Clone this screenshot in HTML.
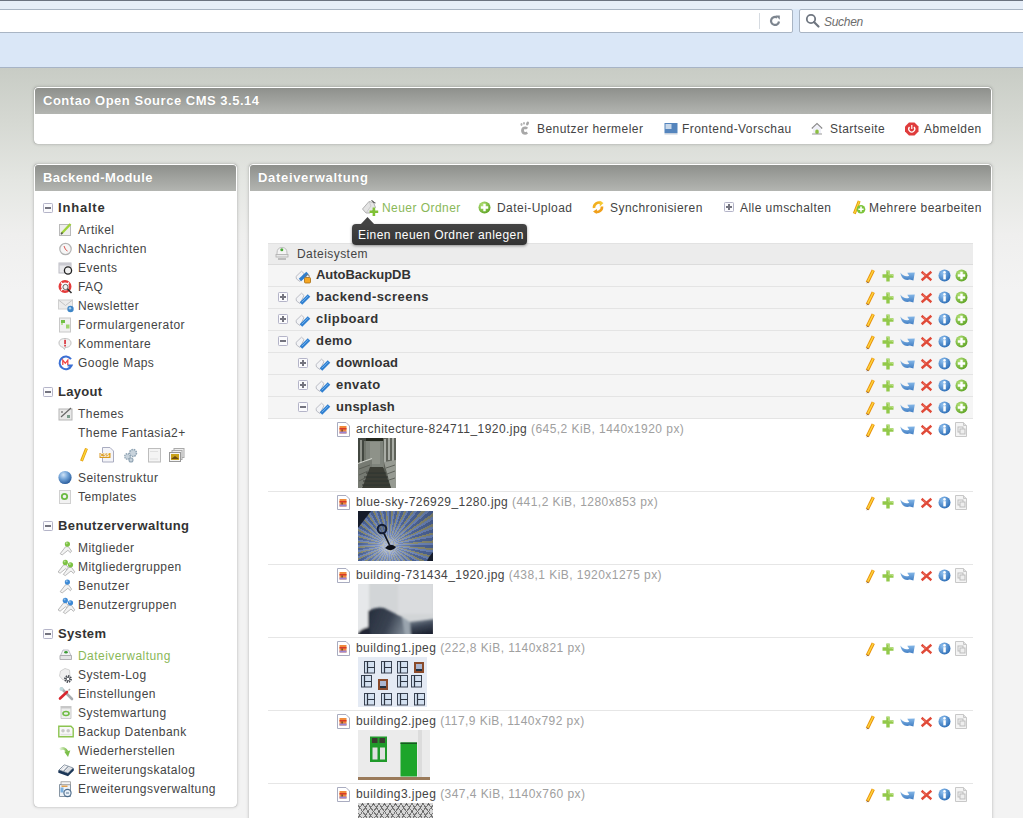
<!DOCTYPE html><html><head><meta charset="utf-8"><style>
*{margin:0;padding:0;box-sizing:border-box}
html,body{width:1023px;height:818px;overflow:hidden}
body{position:relative;font-family:"Liberation Sans",sans-serif;color:#444;
 background:linear-gradient(#c8ccc5 0px,#c8ccc5 68px,#d5d8d2 120px,#e4e6e2 180px,#efefee 235px,#f3f3f3 290px,#f3f3f3 818px);}
.a{position:absolute}
.t{position:absolute;font-size:12px;letter-spacing:0.45px;white-space:nowrap;line-height:14px;height:14px}
.b{font-weight:bold;font-size:13px;letter-spacing:0.45px;line-height:15px}
.gh{letter-spacing:0.6px}
.g{color:#a0a0a0}
.panel{position:absolute;background:#fff;border:1px solid #fff;border-radius:4px;box-shadow:0 0 1px 0 rgba(0,0,0,.25),0 0 3px 1px rgba(0,0,0,.12)}
.hd{position:absolute;left:0;right:0;top:0;height:26px;border-radius:3px 3px 0 0;background:linear-gradient(#8e908c,#b3b5b1)}
.ht{position:absolute;font-size:13px;font-weight:bold;letter-spacing:0.4px;color:#fff;white-space:nowrap;line-height:15px;text-shadow:0 0 1px rgba(0,0,0,.15)}
svg{position:absolute;overflow:visible}
</style></head><body><div class="a" style="left:0;top:0;width:1023px;height:68px;background:#dae7f7"></div>
<div class="a" style="left:0;top:0;width:1023px;height:1px;background:#6b7380"></div>
<div class="a" style="left:0;top:1px;width:1023px;height:8px;background:#e6eef8"></div>
<div class="a" style="left:-5px;top:9px;width:798px;height:24px;background:#fff;border:1px solid #a9b5c4;border-radius:2px"></div>
<div class="a" style="left:759px;top:13px;width:1px;height:16px;background:#d6dbe1"></div>
<svg style="left:768px;top:14px" width="14" height="14" viewBox="0 0 14 14"><path d="M11 7.5A4 4 0 1 1 9.2 3.6" fill="none" stroke="#7d858f" stroke-width="2.2"/><path d="M7.6 1.5L11.8 1.5L11.8 5.8Z" fill="#7d858f"/></svg>
<div class="a" style="left:799px;top:9px;width:240px;height:24px;background:#fff;border:1px solid #a9b5c4;border-radius:2px"></div>
<svg style="left:805px;top:13px" width="16" height="16" viewBox="0 0 16 16"><circle cx="6" cy="6" r="4.2" fill="none" stroke="#6f7680" stroke-width="1.8"/><path d="M9 9L13.5 13.5" stroke="#6f7680" stroke-width="2.2" stroke-linecap="round"/></svg>
<div class="t" style="left:824px;top:14px;font-style:italic;color:#6d6d6d;letter-spacing:-0.3px;top:15px">Suchen</div>
<div class="a" style="left:0;top:67px;width:1023px;height:1px;background:#a7b4c6"></div>
<div class="panel" style="left:34px;top:87px;width:958px;height:57px"><div class="hd"></div></div>
<div class="ht" style="left:43px;top:93px;letter-spacing:0.52px">Contao Open Source CMS 3.5.14</div>
<svg style="left:518px;top:121px" width="14" height="16" viewBox="0 0 14 16"><path d="M7 5.5C3.5 5.5 2.5 9 3.5 11.5S8 14.5 10 12.5L8.5 10.5C7.5 11.5 6 11 6 9.5S7 7.5 8 8.5L10 7C9.5 6 8.5 5.5 7 5.5Z" fill="#a8a8a8"/><ellipse cx="3.5" cy="3.5" rx="1" ry="1.4" fill="#b5b5b5"/><ellipse cx="6" cy="2.3" rx="1" ry="1.4" fill="#b5b5b5"/><ellipse cx="9.5" cy="2.5" rx="1.3" ry="2" fill="#a5a5a5" transform="rotate(30 9.5 2.5)"/></svg>
<div class="t " style="left:537px;top:122px;">Benutzer hermeler</div>
<svg style="left:664px;top:122px" width="14" height="14" viewBox="0 0 14 14"><rect x="0.5" y="1" width="13" height="10" fill="#5585bd"/><rect x="1.5" y="2" width="6" height="5" fill="#c8d8ea"/><rect x="0.5" y="11" width="13" height="1.5" fill="#c5cfdc"/></svg>
<div class="t " style="left:682px;top:122px;">Frontend-Vorschau</div>
<svg style="left:811px;top:122px" width="13" height="14" viewBox="0 0 13 14"><path d="M0.8 6.5L6 1.5L11.2 6.5" fill="none" stroke="#888" stroke-width="1.2"/><path d="M2 6.3V11.8H10V6.3L6 2.6Z" fill="#f0f0f8"/><rect x="4.3" y="7.5" width="3.4" height="4.5" rx="1.5" fill="#8cc040"/><rect x="1" y="11.5" width="10" height="1" fill="#999"/></svg>
<div class="t " style="left:830px;top:122px;">Startseite</div>
<svg style="left:905px;top:122px" width="14" height="14" viewBox="0 0 14 14"><path d="M4 0.5h5.5l4 4v5l-4 4H4l-4-4v-5z" fill="#df3c3c"/><path d="M4.5 5A3 3 0 1 0 9 5" fill="none" stroke="#fff" stroke-width="1.3"/><rect x="6.2" y="3" width="1.2" height="4" fill="#fff"/></svg>
<div class="t " style="left:924px;top:122px;">Abmelden</div>
<div class="panel" style="left:34px;top:164px;width:203px;height:643px"><div class="hd"></div></div>
<div class="ht" style="left:43px;top:170px;letter-spacing:0.42px">Backend-Module</div>
<svg style="left:43px;top:203px" width="10" height="10" viewBox="0 0 10 10"><rect x="0.5" y="0.5" width="9" height="9" rx="0.8" fill="#fbfbfd" stroke="#b4b4c8"/><rect x="2" y="4" width="6" height="2" fill="#74747f"/></svg>
<div class="t b" style="left:58px;top:200px;color:#333;letter-spacing:0.8px">Inhalte</div>
<svg style="left:58px;top:222px" width="16" height="16" viewBox="0 0 16 16"><rect x="1.5" y="2.5" width="11" height="11" fill="#eee" stroke="#b9b9b9"/><path d="M3.5 11.5L12.5 2" stroke="#9fd23a" stroke-width="2.4"/><path d="M3 12.2L4.5 10.5" stroke="#555" stroke-width="1.5"/></svg>
<div class="t " style="left:78px;top:223px;">Artikel</div>
<svg style="left:58px;top:241px" width="16" height="16" viewBox="0 0 16 16"><circle cx="7.5" cy="8" r="5.7" fill="#f6f6f6" stroke="#b3b3b3" stroke-width="1.2"/><path d="M7.5 8.5L6 5M7.5 8.5L9.5 10" stroke="#d9534f" stroke-width="1"/></svg>
<div class="t " style="left:78px;top:242px;">Nachrichten</div>
<svg style="left:58px;top:260px" width="16" height="16" viewBox="0 0 16 16"><rect x="1" y="3" width="12" height="10" fill="#e9e9ec" stroke="#bcbcc4"/><rect x="1" y="3" width="12" height="2.5" fill="#c9c9d0"/><circle cx="10" cy="10.5" r="3.6" fill="#f0f0f0" stroke="#222" stroke-width="1.3"/></svg>
<div class="t " style="left:78px;top:261px;">Events</div>
<svg style="left:58px;top:279px" width="16" height="16" viewBox="0 0 16 16"><circle cx="7" cy="7.5" r="5.2" fill="none" stroke="#e53b3b" stroke-width="2.6"/><path d="M3 3.5L5 5.5M11 3.5L9 5.5M3 11.5L5 9.5" stroke="#fff" stroke-width="1.4"/><circle cx="7.5" cy="8" r="2.6" fill="#f4f4f4" stroke="#555" stroke-width="0.9"/><path d="M9.5 10L13.5 14" stroke="#333" stroke-width="1.6"/></svg>
<div class="t " style="left:78px;top:280px;">FAQ</div>
<svg style="left:58px;top:298px" width="16" height="16" viewBox="0 0 16 16"><rect x="0.5" y="2" width="14" height="9" fill="#ececec" stroke="#d0d0d0"/><path d="M0.5 2L7.5 7.5L14.5 2" fill="none" stroke="#c4c4c4"/><circle cx="12.5" cy="11" r="3.2" fill="#3f86c7"/><circle cx="12" cy="10.3" r="1.2" fill="#a9d0f0"/></svg>
<div class="t " style="left:78px;top:299px;">Newsletter</div>
<svg style="left:58px;top:317px" width="16" height="16" viewBox="0 0 16 16"><rect x="1.5" y="1" width="11" height="14" fill="#f0f0f0" stroke="#c8c8c8"/><rect x="3" y="3" width="4" height="3" fill="#72c046"/><rect x="8" y="7.5" width="3.5" height="4" fill="#9ed56e"/><rect x="3" y="6" width="2" height="2" fill="#b8e096"/></svg>
<div class="t " style="left:78px;top:318px;">Formulargenerator</div>
<svg style="left:58px;top:336px" width="16" height="16" viewBox="0 0 16 16"><path d="M7 2.5C10.8 2.5 13 4.3 13 7S10.8 11.5 7 11.5L6.5 13.5L5 11.3C2.6 10.8 1 9.2 1 7C1 4.3 3.2 2.5 7 2.5Z" fill="#f2f2f2" stroke="#c0c0c0"/><rect x="6.2" y="3.8" width="1.7" height="4.2" fill="#d9363e"/><rect x="6.2" y="8.8" width="1.7" height="1.7" fill="#d9363e"/></svg>
<div class="t " style="left:78px;top:337px;">Kommentare</div>
<svg style="left:58px;top:355px" width="16" height="16" viewBox="0 0 16 16"><path d="M13 4.2A6.3 6.3 0 1 0 13.6 10.5H9.5" fill="none" stroke="#3b6fd4" stroke-width="2"/><path d="M4.8 10V5.2L7.3 8.3L9.8 5.2V10" fill="none" stroke="#f04646" stroke-width="1.3"/></svg>
<div class="t " style="left:78px;top:356px;">Google Maps</div>
<svg style="left:43px;top:387px" width="10" height="10" viewBox="0 0 10 10"><rect x="0.5" y="0.5" width="9" height="9" rx="0.8" fill="#fbfbfd" stroke="#b4b4c8"/><rect x="2" y="4" width="6" height="2" fill="#74747f"/></svg>
<div class="t b" style="left:58px;top:384px;color:#333;letter-spacing:0.3px">Layout</div>
<svg style="left:58px;top:406px" width="16" height="16" viewBox="0 0 16 16"><rect x="1" y="3" width="13" height="11" fill="#e8e8e8" stroke="#b5b5b5"/><path d="M3 11L13 2" stroke="#666" stroke-width="1.2"/><rect x="9" y="9" width="3" height="3" fill="#7a9a8a"/><rect x="3" y="5" width="2" height="2" fill="#999"/></svg>
<div class="t " style="left:78px;top:407px;">Themes</div>
<div class="t " style="left:78px;top:426px;">Theme Fantasia2+</div>
<svg style="left:58px;top:470px" width="16" height="16" viewBox="0 0 16 16"><defs><radialGradient id="gl" cx="38%" cy="30%" r="70%"><stop offset="0" stop-color="#cfe3f7"/><stop offset="0.5" stop-color="#6fa1d6"/><stop offset="1" stop-color="#2c5f9e"/></radialGradient></defs><circle cx="7" cy="7.5" r="6.6" fill="url(#gl)"/></svg>
<div class="t " style="left:78px;top:471px;">Seitenstruktur</div>
<svg style="left:58px;top:489px" width="16" height="16" viewBox="0 0 16 16"><rect x="1.5" y="1.5" width="11" height="13" fill="#f2f2f2" stroke="#d0d0d0"/><circle cx="6.5" cy="7.5" r="2.7" fill="none" stroke="#6dbb45" stroke-width="1.8"/></svg>
<div class="t " style="left:78px;top:490px;">Templates</div>
<svg style="left:43px;top:521px" width="10" height="10" viewBox="0 0 10 10"><rect x="0.5" y="0.5" width="9" height="9" rx="0.8" fill="#fbfbfd" stroke="#b4b4c8"/><rect x="2" y="4" width="6" height="2" fill="#74747f"/></svg>
<div class="t b" style="left:58px;top:518px;color:#333;letter-spacing:0.4px">Benutzerverwaltung</div>
<svg style="left:58px;top:540px" width="16" height="16" viewBox="0 0 16 16"><path d="M2.2 13.7L7.6000000000000005 6.699999999999999L10.4 6.699999999999999L13.600000000000001 11.1L12.4 12.7L9.9 10.3L4.2 14.9Z" fill="#f3f3f3" stroke="#a9a9a9" stroke-width="0.8" stroke-linejoin="round"/><circle cx="9.4" cy="4.1" r="2.6" fill="#7cc242"/><circle cx="8.700000000000001" cy="3.3" r="1" fill="#fff" opacity=".45"/></svg>
<div class="t " style="left:78px;top:541px;">Mitglieder</div>
<svg style="left:58px;top:559px" width="16" height="16" viewBox="0 0 16 16"><path d="M0.09999999999999964 13.0L5.5 6.0L8.3 6.0L11.5 10.4L10.3 12.0L7.8 9.6L2.0999999999999996 14.200000000000001Z" fill="#f3f3f3" stroke="#a9a9a9" stroke-width="0.8" stroke-linejoin="round"/><circle cx="7.3" cy="3.4" r="2.6" fill="#7cc242"/><circle cx="6.6" cy="2.5999999999999996" r="1" fill="#fff" opacity=".45"/><path d="M5.3 15.399999999999999L10.7 8.4L13.5 8.4L16.7 12.8L15.5 14.399999999999999L13.0 12.0L7.3 16.6Z" fill="#f3f3f3" stroke="#a9a9a9" stroke-width="0.8" stroke-linejoin="round"/><circle cx="12.5" cy="5.8" r="2.6" fill="#7cc242"/><circle cx="11.8" cy="5.0" r="1" fill="#fff" opacity=".45"/></svg>
<div class="t " style="left:78px;top:560px;">Mitgliedergruppen</div>
<svg style="left:58px;top:578px" width="16" height="16" viewBox="0 0 16 16"><path d="M2.2 13.7L7.6000000000000005 6.699999999999999L10.4 6.699999999999999L13.600000000000001 11.1L12.4 12.7L9.9 10.3L4.2 14.9Z" fill="#f3f3f3" stroke="#a9a9a9" stroke-width="0.8" stroke-linejoin="round"/><circle cx="9.4" cy="4.1" r="2.6" fill="#3d8ad6"/><circle cx="8.700000000000001" cy="3.3" r="1" fill="#fff" opacity=".45"/></svg>
<div class="t " style="left:78px;top:579px;">Benutzer</div>
<svg style="left:58px;top:597px" width="16" height="16" viewBox="0 0 16 16"><path d="M0.09999999999999964 13.0L5.5 6.0L8.3 6.0L11.5 10.4L10.3 12.0L7.8 9.6L2.0999999999999996 14.200000000000001Z" fill="#f3f3f3" stroke="#a9a9a9" stroke-width="0.8" stroke-linejoin="round"/><circle cx="7.3" cy="3.4" r="2.6" fill="#3d8ad6"/><circle cx="6.6" cy="2.5999999999999996" r="1" fill="#fff" opacity=".45"/><path d="M5.3 15.399999999999999L10.7 8.4L13.5 8.4L16.7 12.8L15.5 14.399999999999999L13.0 12.0L7.3 16.6Z" fill="#f3f3f3" stroke="#a9a9a9" stroke-width="0.8" stroke-linejoin="round"/><circle cx="12.5" cy="5.8" r="2.6" fill="#3d8ad6"/><circle cx="11.8" cy="5.0" r="1" fill="#fff" opacity=".45"/></svg>
<div class="t " style="left:78px;top:598px;">Benutzergruppen</div>
<svg style="left:43px;top:629px" width="10" height="10" viewBox="0 0 10 10"><rect x="0.5" y="0.5" width="9" height="9" rx="0.8" fill="#fbfbfd" stroke="#b4b4c8"/><rect x="2" y="4" width="6" height="2" fill="#74747f"/></svg>
<div class="t b" style="left:58px;top:626px;color:#333;letter-spacing:0.35px">System</div>
<svg style="left:58px;top:648px" width="16" height="16" viewBox="0 0 16 16"><path d="M2.5 7.5L5 2H10.5L13 7.5Z" fill="#f2f2f4" stroke="#b9b9c4" stroke-width="0.9"/><ellipse cx="8" cy="4.3" rx="1.8" ry="1.2" fill="#3a9a35"/><path d="M2 7.5H13.5V11.5H2Z" fill="#e4e4e6" stroke="#a8a8ac" stroke-width="0.9"/></svg>
<div class="t " style="left:78px;top:649px;color:#8ab858;">Dateiverwaltung</div>
<svg style="left:58px;top:667px" width="16" height="16" viewBox="0 0 16 16"><path d="M2.5 4L7 1.5L11.5 3L12 9L5 13L1.5 9Z" fill="#efefef" stroke="#c9c9c9" stroke-width="0.8"/><circle cx="10" cy="12" r="3" fill="none" stroke="#4a4e55" stroke-width="1.8" stroke-dasharray="1.4 0.9"/><circle cx="10" cy="12" r="1.8" fill="none" stroke="#5a5e65" stroke-width="1"/></svg>
<div class="t " style="left:78px;top:668px;">System-Log</div>
<svg style="left:58px;top:686px" width="16" height="16" viewBox="0 0 16 16"><path d="M3.5 2.5L14 13" stroke="#a8acb0" stroke-width="2.6" stroke-linecap="round"/><circle cx="3.5" cy="3" r="2" fill="#c0d8dc"/><path d="M9 6L2 12.5" stroke="#d8262e" stroke-width="2.6" stroke-linecap="round"/><path d="M10.5 4.5L12 3" stroke="#aaa" stroke-width="1.4"/></svg>
<div class="t " style="left:78px;top:687px;">Einstellungen</div>
<svg style="left:58px;top:705px" width="16" height="16" viewBox="0 0 16 16"><rect x="2.5" y="1" width="11" height="2" fill="#c8c8c8"/><path d="M3 3h10v10.5H3z" fill="#eeeeee" stroke="#c6c6c6" stroke-width="0.9"/><ellipse cx="8" cy="8.5" rx="3" ry="2" fill="none" stroke="#6fbc44" stroke-width="1.6"/></svg>
<div class="t " style="left:78px;top:706px;">Systemwartung</div>
<svg style="left:58px;top:724px" width="16" height="16" viewBox="0 0 16 16"><path d="M0.8 2.3H13L15.2 4.5V12.8H0.8Z" fill="#f8f8f8" stroke="#8cc450" stroke-width="1.4"/><circle cx="5" cy="6.8" r="1.8" fill="#c9c9c9"/><circle cx="10.2" cy="6.8" r="1.8" fill="#c9c9c9"/><rect x="2.5" y="9.8" width="11" height="1.5" fill="#e2e2e2"/></svg>
<div class="t " style="left:78px;top:725px;">Backup Datenbank</div>
<svg style="left:58px;top:743px" width="16" height="16" viewBox="0 0 16 16"><defs><linearGradient id="rg" x1="0" x2="1"><stop offset="0" stop-color="#e6f2dc"/><stop offset="1" stop-color="#7cbf4a"/></linearGradient></defs><path d="M2 6.5Q6 3.5 9 8.5" stroke="url(#rg)" stroke-width="2.6" fill="none"/><path d="M6.3 8.8L12.3 7.6L10 14Z" fill="#7cbf4a"/></svg>
<div class="t " style="left:78px;top:744px;">Wiederherstellen</div>
<svg style="left:58px;top:762px" width="16" height="16" viewBox="0 0 16 16"><path d="M0.3 8.6L6 3.6L15.8 6.4V8.4L10 14.2L0.3 10.8Z" fill="#1b3657"/><path d="M1 8L6.2 2.8L10.4 4.2L5.4 9.4Z" fill="#f4f4f6" stroke="#56687c" stroke-width="0.6"/><path d="M5.4 9.4L10.4 4.2L15.2 6L10 11.2Z" fill="#e4e6ea" stroke="#56687c" stroke-width="0.6"/><path d="M3 7.6L7 4.2M7.5 10.2L11.8 5.6M9 10.8L13.2 6.4" stroke="#b9bec6" stroke-width="0.5"/></svg>
<div class="t " style="left:78px;top:763px;">Erweiterungskatalog</div>
<svg style="left:58px;top:781px" width="16" height="16" viewBox="0 0 16 16"><path d="M1.5 3.5h11v12h-11z" fill="#eef2f6" stroke="#7a8a9a" stroke-width="0.9"/><rect x="3" y="0.8" width="9.5" height="3" fill="#f4f4f4" stroke="#888" stroke-width="0.7"/><rect x="3.5" y="4.5" width="6" height="1.5" fill="#e0a050"/><rect x="2.5" y="6.5" width="3" height="5" fill="#7bb0e0"/><circle cx="9.5" cy="12" r="3.6" fill="#e8f0f8" stroke="#4a6a8a" stroke-width="1.1"/><path d="M8 12h3" stroke="#4a6a8a" stroke-width="0.9"/></svg>
<div class="t " style="left:78px;top:782px;">Erweiterungsverwaltung</div>
<svg style="left:79px;top:447px" width="16" height="16" viewBox="0 0 16 16"><path d="M2.5 14L7.5 1.5" stroke="#e39a0b" stroke-width="3"/><path d="M2.8 13.5L7.5 1.8" stroke="#fcd637" stroke-width="1.4"/></svg>
<svg style="left:99px;top:447px" width="16" height="16" viewBox="0 0 16 16"><path d="M3.5 0.5h7.5l3.5 3.5v11h-11z" fill="#f4f4f8" stroke="#a9acc0"/><rect x="0.5" y="6" width="11" height="5" fill="#d99a20"/><text x="6" y="10.2" font-size="4.5" font-family="Liberation Sans" font-weight="bold" fill="#fff" text-anchor="middle">CSS</text></svg>
<svg style="left:123px;top:447px" width="16" height="16" viewBox="0 0 16 16"><circle cx="10" cy="6" r="3.5" fill="#c8d3dc" stroke="#8fa3b3" stroke-width="1.5" stroke-dasharray="1.6 0.8"/><circle cx="4.5" cy="9.5" r="2.8" fill="#c8d3dc" stroke="#8fa3b3" stroke-width="1.3" stroke-dasharray="1.4 0.8"/><circle cx="8" cy="13" r="2" fill="#c8d3dc" stroke="#8fa3b3" stroke-width="1.1"/></svg>
<svg style="left:148px;top:448px" width="16" height="16" viewBox="0 0 16 16"><rect x="0.5" y="0.5" width="12" height="13.5" fill="#f4f4f4" stroke="#bdbdbd"/><path d="M2.5 3.5h8M2.5 11h8" stroke="#ccc" stroke-dasharray="1 1"/></svg>
<svg style="left:169px;top:448px" width="16" height="16" viewBox="0 0 16 16"><rect x="5" y="0.5" width="10" height="9" fill="#eee" stroke="#aaa"/><rect x="3" y="2.5" width="10" height="9" fill="#eee" stroke="#aaa"/><rect x="0.5" y="4.5" width="11" height="9" fill="#f6f6f6" stroke="#999"/><rect x="2" y="6" width="8" height="6" fill="#c9a21a"/><path d="M2 11L6 8L10 11" fill="#6b4a10"/></svg>
<div class="panel" style="left:249px;top:164px;width:743px;height:700px"><div class="hd"></div></div>
<div class="ht" style="left:258px;top:170px;letter-spacing:0.68px">Dateiverwaltung</div>
<svg style="left:361px;top:199px" width="18" height="18" viewBox="0 0 18 18"><path d="M1.5 10L8 2.5L12.5 3.5L14.5 8.5L9 14L5 14Z" fill="#e4e4e4" stroke="#aaaaaa" stroke-width="0.9"/><path d="M8 2.5L10 7L5 14" fill="none" stroke="#c4c4c4" stroke-width="0.8"/><path d="M10.5 1L12.5 3.5L14.5 4" stroke="#666" stroke-width="1"/><path d="M11.6 8.5h2.6v3h3v2.6h-3v3h-2.6v-3h-3v-2.6h3z" fill="#80c236"/></svg>
<div class="t " style="left:382px;top:201px;color:#8ab858;">Neuer Ordner</div>
<svg style="left:478px;top:201px" width="13" height="13" viewBox="0 0 13 13"><defs><radialGradient id="gg" cx="35%" cy="30%" r="75%"><stop offset="0" stop-color="#b6e27a"/><stop offset="1" stop-color="#5ea424"/></radialGradient></defs><circle cx="6.5" cy="6.5" r="6" fill="url(#gg)"/><path d="M5.3 2.8h2.4v2.5h2.5v2.4H7.7v2.5H5.3V7.7H2.8V5.3h2.5z" fill="#fff"/></svg>
<div class="t " style="left:497px;top:201px;">Datei-Upload</div>
<svg style="left:591px;top:200px" width="14" height="15" viewBox="0 0 14 15"><path d="M3 8A5 5 0 0 1 10.5 3.2" fill="none" stroke="#f2b01e" stroke-width="2.6"/><path d="M8.5 0.8L12.5 3L8.8 6.5Z" fill="#f6c933"/><path d="M11 6.5A5 5 0 0 1 4 11.5" fill="none" stroke="#f0a01c" stroke-width="2.6"/><path d="M6 9L2 11.5L5.8 13.8Z" fill="#f0a01c"/></svg>
<div class="t " style="left:610px;top:201px;">Synchronisieren</div>
<svg style="left:724px;top:202px" width="10" height="10" viewBox="0 0 10 10"><rect x="0.5" y="0.5" width="9" height="9" rx="0.8" fill="#fbfbfd" stroke="#b4b4c8"/><rect x="2" y="4" width="6" height="2" fill="#74747f"/><rect x="4" y="2" width="2" height="6" fill="#74747f"/></svg>
<div class="t " style="left:740px;top:201px;">Alle umschalten</div>
<svg style="left:852px;top:200px" width="14" height="15" viewBox="0 0 14 15"><path d="M2.3 13.6L7.2 1" stroke="#e39a0b" stroke-width="3"/><path d="M2.5 13.2L7.2 1.3" stroke="#fcd637" stroke-width="1.3"/><circle cx="9" cy="9.2" r="4.3" fill="#7cc43a"/><path d="M8.2 6.6h1.6v1.8h1.8v1.6H9.8v1.8H8.2V10H6.4V8.4h1.8z" fill="#fff"/></svg>
<div class="t " style="left:869px;top:201px;">Mehrere bearbeiten</div>
<div class="a" style="left:268px;top:243px;width:705px;height:22px;background:#ececec;border-top:1px solid #e2e2e2;border-bottom:1px solid #dcdcdc"></div>
<svg style="left:275px;top:246px" width="14" height="15" viewBox="0 0 14 15"><path d="M2 7Q2 1.5 7 1.5Q12 1.5 12 7v2H2z" fill="#f4f4f4" stroke="#bdbdbd"/><circle cx="6.8" cy="3.8" r="1.5" fill="#48a835"/><rect x="1" y="8.5" width="12" height="2.5" fill="#e8e8e8" stroke="#b0b0b0" stroke-width="0.8"/><rect x="3" y="12" width="8" height="2" fill="#bdbdbd"/></svg>
<div class="t " style="left:297px;top:247px;">Dateisystem</div>
<div class="a" style="left:268px;top:265px;width:705px;height:22px;background:#f5f5f5;border-bottom:1px solid #e4e4e4"></div>
<svg style="left:295px;top:268px" width="16" height="16" viewBox="0 0 16 16"><path d="M1 8.5L6.5 3.2L9 5.5L5 13.5L1.5 11Z" fill="#f2f3f6" stroke="#b5b8bf" stroke-width="0.9"/><path d="M5 12L12.5 5" stroke="#2f7fd0" stroke-width="3.4"/><rect x="9.5" y="9.5" width="6" height="5.5" rx="1" fill="#f5a623" stroke="#a86d12" stroke-width="0.8"/><path d="M10.8 9.5V8.3a1.7 1.7 0 0 1 3.4 0v1.2" fill="none" stroke="#777" stroke-width="1"/></svg>
<div class="t b" style="left:316px;top:267px;color:#333;letter-spacing:-0.05px">AutoBackupDB</div>
<svg style="left:866px;top:269px" width="9" height="15" viewBox="0 0 9 15"><path d="M1.3 13.4L7.3 1.2" stroke="#e8900a" stroke-width="3.4" stroke-linecap="butt"/><path d="M1.5 12.8L7.3 1.4" stroke="#fdd23c" stroke-width="1.5"/><path d="M0.5 14.6L1.2 12.4L2.9 13.2Z" fill="#8a6a60"/></svg>
<svg style="left:882px;top:270px" width="12" height="12" viewBox="0 0 12 12"><path d="M4.3 0.5h3.4v3.8h3.8v3.4H7.7v3.8H4.3V7.7H0.5V4.3h3.8z" fill="#92c94a"/><path d="M5 1.3h1.8v3.7h3.7v1" stroke="#c0e58a" stroke-width="0.8" fill="none"/></svg>
<svg style="left:900px;top:272px" width="15" height="9" viewBox="0 0 15 9"><defs><linearGradient id="ag" x1="0" y1="0" x2="0" y2="1"><stop offset="0" stop-color="#86b8e8"/><stop offset="1" stop-color="#3f7cc2"/></linearGradient></defs><path d="M0.4 0.6C1 6 5 9.2 9.8 7.6L13.4 8.6L14.8 0.4L7.2 0.8L9.2 3.8C6 5.2 3 4 0.4 0.6Z" fill="url(#ag)"/></svg>
<svg style="left:921px;top:271px" width="11" height="10" viewBox="0 0 11 10"><path d="M1.6 1.6L9.4 8.4M9.4 1.6L1.6 8.4" stroke="#e04a38" stroke-width="2.5" stroke-linecap="square"/><path d="M2 2L5 4.6" stroke="#f07a68" stroke-width="0.8"/></svg>
<svg style="left:938px;top:269px" width="13" height="13" viewBox="0 0 13 13"><defs><radialGradient id="ig" cx="35%" cy="30%" r="75%"><stop offset="0" stop-color="#8fc0ef"/><stop offset="1" stop-color="#2b6cb5"/></radialGradient></defs><circle cx="6.5" cy="6.5" r="6" fill="url(#ig)"/><rect x="5.3" y="5.2" width="2.5" height="5.2" fill="#fff"/><circle cx="6.5" cy="3.4" r="1.3" fill="#fff"/></svg>
<svg style="left:955px;top:269px" width="13" height="13" viewBox="0 0 13 13"><defs><radialGradient id="gg" cx="35%" cy="30%" r="75%"><stop offset="0" stop-color="#b6e27a"/><stop offset="1" stop-color="#5ea424"/></radialGradient></defs><circle cx="6.5" cy="6.5" r="6" fill="url(#gg)"/><path d="M5.3 2.8h2.4v2.5h2.5v2.4H7.7v2.5H5.3V7.7H2.8V5.3h2.5z" fill="#fff"/></svg>
<div class="a" style="left:268px;top:287px;width:705px;height:22px;background:#f5f5f5;border-bottom:1px solid #e4e4e4"></div>
<svg style="left:278px;top:292px" width="10" height="10" viewBox="0 0 10 10"><rect x="0.5" y="0.5" width="9" height="9" rx="0.8" fill="#fbfbfd" stroke="#b4b4c8"/><rect x="2" y="4" width="6" height="2" fill="#74747f"/><rect x="4" y="2" width="2" height="6" fill="#74747f"/></svg>
<svg style="left:295px;top:290px" width="16" height="16" viewBox="0 0 16 16"><path d="M1 8.5L6.5 3.2L9 5.5L5 13.5L1.5 11Z" fill="#f2f3f6" stroke="#b5b8bf" stroke-width="0.9"/><path d="M6 13.5L14 5.5" stroke="#2f7fd0" stroke-width="3.6" stroke-linecap="butt"/><path d="M6.8 12.2L13.4 5.8" stroke="#6cb0ef" stroke-width="1"/></svg>
<div class="t b" style="left:316px;top:289px;color:#333;letter-spacing:0.45px">backend-screens</div>
<svg style="left:866px;top:291px" width="9" height="15" viewBox="0 0 9 15"><path d="M1.3 13.4L7.3 1.2" stroke="#e8900a" stroke-width="3.4" stroke-linecap="butt"/><path d="M1.5 12.8L7.3 1.4" stroke="#fdd23c" stroke-width="1.5"/><path d="M0.5 14.6L1.2 12.4L2.9 13.2Z" fill="#8a6a60"/></svg>
<svg style="left:882px;top:292px" width="12" height="12" viewBox="0 0 12 12"><path d="M4.3 0.5h3.4v3.8h3.8v3.4H7.7v3.8H4.3V7.7H0.5V4.3h3.8z" fill="#92c94a"/><path d="M5 1.3h1.8v3.7h3.7v1" stroke="#c0e58a" stroke-width="0.8" fill="none"/></svg>
<svg style="left:900px;top:294px" width="15" height="9" viewBox="0 0 15 9"><defs><linearGradient id="ag" x1="0" y1="0" x2="0" y2="1"><stop offset="0" stop-color="#86b8e8"/><stop offset="1" stop-color="#3f7cc2"/></linearGradient></defs><path d="M0.4 0.6C1 6 5 9.2 9.8 7.6L13.4 8.6L14.8 0.4L7.2 0.8L9.2 3.8C6 5.2 3 4 0.4 0.6Z" fill="url(#ag)"/></svg>
<svg style="left:921px;top:293px" width="11" height="10" viewBox="0 0 11 10"><path d="M1.6 1.6L9.4 8.4M9.4 1.6L1.6 8.4" stroke="#e04a38" stroke-width="2.5" stroke-linecap="square"/><path d="M2 2L5 4.6" stroke="#f07a68" stroke-width="0.8"/></svg>
<svg style="left:938px;top:291px" width="13" height="13" viewBox="0 0 13 13"><defs><radialGradient id="ig" cx="35%" cy="30%" r="75%"><stop offset="0" stop-color="#8fc0ef"/><stop offset="1" stop-color="#2b6cb5"/></radialGradient></defs><circle cx="6.5" cy="6.5" r="6" fill="url(#ig)"/><rect x="5.3" y="5.2" width="2.5" height="5.2" fill="#fff"/><circle cx="6.5" cy="3.4" r="1.3" fill="#fff"/></svg>
<svg style="left:955px;top:291px" width="13" height="13" viewBox="0 0 13 13"><defs><radialGradient id="gg" cx="35%" cy="30%" r="75%"><stop offset="0" stop-color="#b6e27a"/><stop offset="1" stop-color="#5ea424"/></radialGradient></defs><circle cx="6.5" cy="6.5" r="6" fill="url(#gg)"/><path d="M5.3 2.8h2.4v2.5h2.5v2.4H7.7v2.5H5.3V7.7H2.8V5.3h2.5z" fill="#fff"/></svg>
<div class="a" style="left:268px;top:309px;width:705px;height:22px;background:#f5f5f5;border-bottom:1px solid #e4e4e4"></div>
<svg style="left:278px;top:314px" width="10" height="10" viewBox="0 0 10 10"><rect x="0.5" y="0.5" width="9" height="9" rx="0.8" fill="#fbfbfd" stroke="#b4b4c8"/><rect x="2" y="4" width="6" height="2" fill="#74747f"/><rect x="4" y="2" width="2" height="6" fill="#74747f"/></svg>
<svg style="left:295px;top:312px" width="16" height="16" viewBox="0 0 16 16"><path d="M1 8.5L6.5 3.2L9 5.5L5 13.5L1.5 11Z" fill="#f2f3f6" stroke="#b5b8bf" stroke-width="0.9"/><path d="M6 13.5L14 5.5" stroke="#2f7fd0" stroke-width="3.6" stroke-linecap="butt"/><path d="M6.8 12.2L13.4 5.8" stroke="#6cb0ef" stroke-width="1"/></svg>
<div class="t b" style="left:316px;top:311px;color:#333;letter-spacing:0.45px">clipboard</div>
<svg style="left:866px;top:313px" width="9" height="15" viewBox="0 0 9 15"><path d="M1.3 13.4L7.3 1.2" stroke="#e8900a" stroke-width="3.4" stroke-linecap="butt"/><path d="M1.5 12.8L7.3 1.4" stroke="#fdd23c" stroke-width="1.5"/><path d="M0.5 14.6L1.2 12.4L2.9 13.2Z" fill="#8a6a60"/></svg>
<svg style="left:882px;top:314px" width="12" height="12" viewBox="0 0 12 12"><path d="M4.3 0.5h3.4v3.8h3.8v3.4H7.7v3.8H4.3V7.7H0.5V4.3h3.8z" fill="#92c94a"/><path d="M5 1.3h1.8v3.7h3.7v1" stroke="#c0e58a" stroke-width="0.8" fill="none"/></svg>
<svg style="left:900px;top:316px" width="15" height="9" viewBox="0 0 15 9"><defs><linearGradient id="ag" x1="0" y1="0" x2="0" y2="1"><stop offset="0" stop-color="#86b8e8"/><stop offset="1" stop-color="#3f7cc2"/></linearGradient></defs><path d="M0.4 0.6C1 6 5 9.2 9.8 7.6L13.4 8.6L14.8 0.4L7.2 0.8L9.2 3.8C6 5.2 3 4 0.4 0.6Z" fill="url(#ag)"/></svg>
<svg style="left:921px;top:315px" width="11" height="10" viewBox="0 0 11 10"><path d="M1.6 1.6L9.4 8.4M9.4 1.6L1.6 8.4" stroke="#e04a38" stroke-width="2.5" stroke-linecap="square"/><path d="M2 2L5 4.6" stroke="#f07a68" stroke-width="0.8"/></svg>
<svg style="left:938px;top:313px" width="13" height="13" viewBox="0 0 13 13"><defs><radialGradient id="ig" cx="35%" cy="30%" r="75%"><stop offset="0" stop-color="#8fc0ef"/><stop offset="1" stop-color="#2b6cb5"/></radialGradient></defs><circle cx="6.5" cy="6.5" r="6" fill="url(#ig)"/><rect x="5.3" y="5.2" width="2.5" height="5.2" fill="#fff"/><circle cx="6.5" cy="3.4" r="1.3" fill="#fff"/></svg>
<svg style="left:955px;top:313px" width="13" height="13" viewBox="0 0 13 13"><defs><radialGradient id="gg" cx="35%" cy="30%" r="75%"><stop offset="0" stop-color="#b6e27a"/><stop offset="1" stop-color="#5ea424"/></radialGradient></defs><circle cx="6.5" cy="6.5" r="6" fill="url(#gg)"/><path d="M5.3 2.8h2.4v2.5h2.5v2.4H7.7v2.5H5.3V7.7H2.8V5.3h2.5z" fill="#fff"/></svg>
<div class="a" style="left:268px;top:331px;width:705px;height:22px;background:#f5f5f5;border-bottom:1px solid #e4e4e4"></div>
<svg style="left:278px;top:336px" width="10" height="10" viewBox="0 0 10 10"><rect x="0.5" y="0.5" width="9" height="9" rx="0.8" fill="#fbfbfd" stroke="#b4b4c8"/><rect x="2" y="4" width="6" height="2" fill="#74747f"/></svg>
<svg style="left:295px;top:334px" width="16" height="16" viewBox="0 0 16 16"><path d="M1 8.5L6.5 3.2L9 5.5L5 13.5L1.5 11Z" fill="#f2f3f6" stroke="#b5b8bf" stroke-width="0.9"/><path d="M6 13.5L14 5.5" stroke="#2f7fd0" stroke-width="3.6" stroke-linecap="butt"/><path d="M6.8 12.2L13.4 5.8" stroke="#6cb0ef" stroke-width="1"/></svg>
<div class="t b" style="left:316px;top:333px;color:#333;letter-spacing:0.45px">demo</div>
<svg style="left:866px;top:335px" width="9" height="15" viewBox="0 0 9 15"><path d="M1.3 13.4L7.3 1.2" stroke="#e8900a" stroke-width="3.4" stroke-linecap="butt"/><path d="M1.5 12.8L7.3 1.4" stroke="#fdd23c" stroke-width="1.5"/><path d="M0.5 14.6L1.2 12.4L2.9 13.2Z" fill="#8a6a60"/></svg>
<svg style="left:882px;top:336px" width="12" height="12" viewBox="0 0 12 12"><path d="M4.3 0.5h3.4v3.8h3.8v3.4H7.7v3.8H4.3V7.7H0.5V4.3h3.8z" fill="#92c94a"/><path d="M5 1.3h1.8v3.7h3.7v1" stroke="#c0e58a" stroke-width="0.8" fill="none"/></svg>
<svg style="left:900px;top:338px" width="15" height="9" viewBox="0 0 15 9"><defs><linearGradient id="ag" x1="0" y1="0" x2="0" y2="1"><stop offset="0" stop-color="#86b8e8"/><stop offset="1" stop-color="#3f7cc2"/></linearGradient></defs><path d="M0.4 0.6C1 6 5 9.2 9.8 7.6L13.4 8.6L14.8 0.4L7.2 0.8L9.2 3.8C6 5.2 3 4 0.4 0.6Z" fill="url(#ag)"/></svg>
<svg style="left:921px;top:337px" width="11" height="10" viewBox="0 0 11 10"><path d="M1.6 1.6L9.4 8.4M9.4 1.6L1.6 8.4" stroke="#e04a38" stroke-width="2.5" stroke-linecap="square"/><path d="M2 2L5 4.6" stroke="#f07a68" stroke-width="0.8"/></svg>
<svg style="left:938px;top:335px" width="13" height="13" viewBox="0 0 13 13"><defs><radialGradient id="ig" cx="35%" cy="30%" r="75%"><stop offset="0" stop-color="#8fc0ef"/><stop offset="1" stop-color="#2b6cb5"/></radialGradient></defs><circle cx="6.5" cy="6.5" r="6" fill="url(#ig)"/><rect x="5.3" y="5.2" width="2.5" height="5.2" fill="#fff"/><circle cx="6.5" cy="3.4" r="1.3" fill="#fff"/></svg>
<svg style="left:955px;top:335px" width="13" height="13" viewBox="0 0 13 13"><defs><radialGradient id="gg" cx="35%" cy="30%" r="75%"><stop offset="0" stop-color="#b6e27a"/><stop offset="1" stop-color="#5ea424"/></radialGradient></defs><circle cx="6.5" cy="6.5" r="6" fill="url(#gg)"/><path d="M5.3 2.8h2.4v2.5h2.5v2.4H7.7v2.5H5.3V7.7H2.8V5.3h2.5z" fill="#fff"/></svg>
<div class="a" style="left:268px;top:353px;width:705px;height:22px;background:#f5f5f5;border-bottom:1px solid #e4e4e4"></div>
<svg style="left:298px;top:358px" width="10" height="10" viewBox="0 0 10 10"><rect x="0.5" y="0.5" width="9" height="9" rx="0.8" fill="#fbfbfd" stroke="#b4b4c8"/><rect x="2" y="4" width="6" height="2" fill="#74747f"/><rect x="4" y="2" width="2" height="6" fill="#74747f"/></svg>
<svg style="left:315px;top:356px" width="16" height="16" viewBox="0 0 16 16"><path d="M1 8.5L6.5 3.2L9 5.5L5 13.5L1.5 11Z" fill="#f2f3f6" stroke="#b5b8bf" stroke-width="0.9"/><path d="M6 13.5L14 5.5" stroke="#2f7fd0" stroke-width="3.6" stroke-linecap="butt"/><path d="M6.8 12.2L13.4 5.8" stroke="#6cb0ef" stroke-width="1"/></svg>
<div class="t b" style="left:336px;top:355px;color:#333;letter-spacing:0.2px">download</div>
<svg style="left:866px;top:357px" width="9" height="15" viewBox="0 0 9 15"><path d="M1.3 13.4L7.3 1.2" stroke="#e8900a" stroke-width="3.4" stroke-linecap="butt"/><path d="M1.5 12.8L7.3 1.4" stroke="#fdd23c" stroke-width="1.5"/><path d="M0.5 14.6L1.2 12.4L2.9 13.2Z" fill="#8a6a60"/></svg>
<svg style="left:882px;top:358px" width="12" height="12" viewBox="0 0 12 12"><path d="M4.3 0.5h3.4v3.8h3.8v3.4H7.7v3.8H4.3V7.7H0.5V4.3h3.8z" fill="#92c94a"/><path d="M5 1.3h1.8v3.7h3.7v1" stroke="#c0e58a" stroke-width="0.8" fill="none"/></svg>
<svg style="left:900px;top:360px" width="15" height="9" viewBox="0 0 15 9"><defs><linearGradient id="ag" x1="0" y1="0" x2="0" y2="1"><stop offset="0" stop-color="#86b8e8"/><stop offset="1" stop-color="#3f7cc2"/></linearGradient></defs><path d="M0.4 0.6C1 6 5 9.2 9.8 7.6L13.4 8.6L14.8 0.4L7.2 0.8L9.2 3.8C6 5.2 3 4 0.4 0.6Z" fill="url(#ag)"/></svg>
<svg style="left:921px;top:359px" width="11" height="10" viewBox="0 0 11 10"><path d="M1.6 1.6L9.4 8.4M9.4 1.6L1.6 8.4" stroke="#e04a38" stroke-width="2.5" stroke-linecap="square"/><path d="M2 2L5 4.6" stroke="#f07a68" stroke-width="0.8"/></svg>
<svg style="left:938px;top:357px" width="13" height="13" viewBox="0 0 13 13"><defs><radialGradient id="ig" cx="35%" cy="30%" r="75%"><stop offset="0" stop-color="#8fc0ef"/><stop offset="1" stop-color="#2b6cb5"/></radialGradient></defs><circle cx="6.5" cy="6.5" r="6" fill="url(#ig)"/><rect x="5.3" y="5.2" width="2.5" height="5.2" fill="#fff"/><circle cx="6.5" cy="3.4" r="1.3" fill="#fff"/></svg>
<svg style="left:955px;top:357px" width="13" height="13" viewBox="0 0 13 13"><defs><radialGradient id="gg" cx="35%" cy="30%" r="75%"><stop offset="0" stop-color="#b6e27a"/><stop offset="1" stop-color="#5ea424"/></radialGradient></defs><circle cx="6.5" cy="6.5" r="6" fill="url(#gg)"/><path d="M5.3 2.8h2.4v2.5h2.5v2.4H7.7v2.5H5.3V7.7H2.8V5.3h2.5z" fill="#fff"/></svg>
<div class="a" style="left:268px;top:375px;width:705px;height:22px;background:#f5f5f5;border-bottom:1px solid #e4e4e4"></div>
<svg style="left:298px;top:380px" width="10" height="10" viewBox="0 0 10 10"><rect x="0.5" y="0.5" width="9" height="9" rx="0.8" fill="#fbfbfd" stroke="#b4b4c8"/><rect x="2" y="4" width="6" height="2" fill="#74747f"/><rect x="4" y="2" width="2" height="6" fill="#74747f"/></svg>
<svg style="left:315px;top:378px" width="16" height="16" viewBox="0 0 16 16"><path d="M1 8.5L6.5 3.2L9 5.5L5 13.5L1.5 11Z" fill="#f2f3f6" stroke="#b5b8bf" stroke-width="0.9"/><path d="M6 13.5L14 5.5" stroke="#2f7fd0" stroke-width="3.6" stroke-linecap="butt"/><path d="M6.8 12.2L13.4 5.8" stroke="#6cb0ef" stroke-width="1"/></svg>
<div class="t b" style="left:336px;top:377px;color:#333;letter-spacing:0.45px">envato</div>
<svg style="left:866px;top:379px" width="9" height="15" viewBox="0 0 9 15"><path d="M1.3 13.4L7.3 1.2" stroke="#e8900a" stroke-width="3.4" stroke-linecap="butt"/><path d="M1.5 12.8L7.3 1.4" stroke="#fdd23c" stroke-width="1.5"/><path d="M0.5 14.6L1.2 12.4L2.9 13.2Z" fill="#8a6a60"/></svg>
<svg style="left:882px;top:380px" width="12" height="12" viewBox="0 0 12 12"><path d="M4.3 0.5h3.4v3.8h3.8v3.4H7.7v3.8H4.3V7.7H0.5V4.3h3.8z" fill="#92c94a"/><path d="M5 1.3h1.8v3.7h3.7v1" stroke="#c0e58a" stroke-width="0.8" fill="none"/></svg>
<svg style="left:900px;top:382px" width="15" height="9" viewBox="0 0 15 9"><defs><linearGradient id="ag" x1="0" y1="0" x2="0" y2="1"><stop offset="0" stop-color="#86b8e8"/><stop offset="1" stop-color="#3f7cc2"/></linearGradient></defs><path d="M0.4 0.6C1 6 5 9.2 9.8 7.6L13.4 8.6L14.8 0.4L7.2 0.8L9.2 3.8C6 5.2 3 4 0.4 0.6Z" fill="url(#ag)"/></svg>
<svg style="left:921px;top:381px" width="11" height="10" viewBox="0 0 11 10"><path d="M1.6 1.6L9.4 8.4M9.4 1.6L1.6 8.4" stroke="#e04a38" stroke-width="2.5" stroke-linecap="square"/><path d="M2 2L5 4.6" stroke="#f07a68" stroke-width="0.8"/></svg>
<svg style="left:938px;top:379px" width="13" height="13" viewBox="0 0 13 13"><defs><radialGradient id="ig" cx="35%" cy="30%" r="75%"><stop offset="0" stop-color="#8fc0ef"/><stop offset="1" stop-color="#2b6cb5"/></radialGradient></defs><circle cx="6.5" cy="6.5" r="6" fill="url(#ig)"/><rect x="5.3" y="5.2" width="2.5" height="5.2" fill="#fff"/><circle cx="6.5" cy="3.4" r="1.3" fill="#fff"/></svg>
<svg style="left:955px;top:379px" width="13" height="13" viewBox="0 0 13 13"><defs><radialGradient id="gg" cx="35%" cy="30%" r="75%"><stop offset="0" stop-color="#b6e27a"/><stop offset="1" stop-color="#5ea424"/></radialGradient></defs><circle cx="6.5" cy="6.5" r="6" fill="url(#gg)"/><path d="M5.3 2.8h2.4v2.5h2.5v2.4H7.7v2.5H5.3V7.7H2.8V5.3h2.5z" fill="#fff"/></svg>
<div class="a" style="left:268px;top:397px;width:705px;height:22px;background:#f5f5f5;border-bottom:1px solid #e4e4e4"></div>
<svg style="left:298px;top:402px" width="10" height="10" viewBox="0 0 10 10"><rect x="0.5" y="0.5" width="9" height="9" rx="0.8" fill="#fbfbfd" stroke="#b4b4c8"/><rect x="2" y="4" width="6" height="2" fill="#74747f"/></svg>
<svg style="left:315px;top:400px" width="16" height="16" viewBox="0 0 16 16"><path d="M1 8.5L6.5 3.2L9 5.5L5 13.5L1.5 11Z" fill="#f2f3f6" stroke="#b5b8bf" stroke-width="0.9"/><path d="M6 13.5L14 5.5" stroke="#2f7fd0" stroke-width="3.6" stroke-linecap="butt"/><path d="M6.8 12.2L13.4 5.8" stroke="#6cb0ef" stroke-width="1"/></svg>
<div class="t b" style="left:336px;top:399px;color:#333;letter-spacing:0.25px">unsplash</div>
<svg style="left:866px;top:401px" width="9" height="15" viewBox="0 0 9 15"><path d="M1.3 13.4L7.3 1.2" stroke="#e8900a" stroke-width="3.4" stroke-linecap="butt"/><path d="M1.5 12.8L7.3 1.4" stroke="#fdd23c" stroke-width="1.5"/><path d="M0.5 14.6L1.2 12.4L2.9 13.2Z" fill="#8a6a60"/></svg>
<svg style="left:882px;top:402px" width="12" height="12" viewBox="0 0 12 12"><path d="M4.3 0.5h3.4v3.8h3.8v3.4H7.7v3.8H4.3V7.7H0.5V4.3h3.8z" fill="#92c94a"/><path d="M5 1.3h1.8v3.7h3.7v1" stroke="#c0e58a" stroke-width="0.8" fill="none"/></svg>
<svg style="left:900px;top:404px" width="15" height="9" viewBox="0 0 15 9"><defs><linearGradient id="ag" x1="0" y1="0" x2="0" y2="1"><stop offset="0" stop-color="#86b8e8"/><stop offset="1" stop-color="#3f7cc2"/></linearGradient></defs><path d="M0.4 0.6C1 6 5 9.2 9.8 7.6L13.4 8.6L14.8 0.4L7.2 0.8L9.2 3.8C6 5.2 3 4 0.4 0.6Z" fill="url(#ag)"/></svg>
<svg style="left:921px;top:403px" width="11" height="10" viewBox="0 0 11 10"><path d="M1.6 1.6L9.4 8.4M9.4 1.6L1.6 8.4" stroke="#e04a38" stroke-width="2.5" stroke-linecap="square"/><path d="M2 2L5 4.6" stroke="#f07a68" stroke-width="0.8"/></svg>
<svg style="left:938px;top:401px" width="13" height="13" viewBox="0 0 13 13"><defs><radialGradient id="ig" cx="35%" cy="30%" r="75%"><stop offset="0" stop-color="#8fc0ef"/><stop offset="1" stop-color="#2b6cb5"/></radialGradient></defs><circle cx="6.5" cy="6.5" r="6" fill="url(#ig)"/><rect x="5.3" y="5.2" width="2.5" height="5.2" fill="#fff"/><circle cx="6.5" cy="3.4" r="1.3" fill="#fff"/></svg>
<svg style="left:955px;top:401px" width="13" height="13" viewBox="0 0 13 13"><defs><radialGradient id="gg" cx="35%" cy="30%" r="75%"><stop offset="0" stop-color="#b6e27a"/><stop offset="1" stop-color="#5ea424"/></radialGradient></defs><circle cx="6.5" cy="6.5" r="6" fill="url(#gg)"/><path d="M5.3 2.8h2.4v2.5h2.5v2.4H7.7v2.5H5.3V7.7H2.8V5.3h2.5z" fill="#fff"/></svg>
<div class="a" style="left:268px;top:419px;width:705px;height:73px;background:#fff;border-bottom:1px solid #e6e6e6"></div>
<svg style="left:337px;top:422px" width="13" height="15" viewBox="0 0 13 15"><path d="M0.5 0.5h8.5l3.5 3.5v10.5h-12z" fill="#fff" stroke="#a9acc0"/><rect x="2.5" y="4" width="7" height="7.5" fill="#f08a3c"/><rect x="2.5" y="6" width="7" height="1.5" fill="#d8382a"/><rect x="2.5" y="9.5" width="7" height="2" fill="#9b86d6"/><rect x="4.5" y="7.5" width="1.2" height="2" fill="#5a3a20"/></svg>
<div class="t" style="left:356px;top:422px">architecture-824711_1920.jpg <span class="g">(645,2 KiB, 1440x1920 px)</span></div>
<div class="a" style="left:358px;top:438px;width:38px;height:50px;overflow:hidden"><svg style="left:0;top:0" width="38" height="50" viewBox="0 0 38 50"><defs><filter id="bl1"><feGaussianBlur stdDeviation="0.45"/></filter></defs><g filter="url(#bl1)">
<rect width="38" height="50" fill="#5a5e56"/>
<rect x="8" y="2" width="18" height="28" fill="#7f847b"/><rect x="12" y="4" width="10" height="22" fill="#8e9289"/>
<rect x="0" y="0" width="38" height="3" fill="#22261f"/>
<path d="M0 0H8V25L0 28Z" fill="#43473f"/><path d="M3 2V26" stroke="#c4c8c0" stroke-width="1.2"/><path d="M7 3V23" stroke="#9ea29a" stroke-width="1"/>
<path d="M25 0H38V30H26Z" fill="#5e625a"/><path d="M27 1V24M31 0V22M35 0V26" stroke="#d2d5ce" stroke-width="1.3"/>
<path d="M0 26L14 21V29L4 50H0Z" fill="#767a72"/><path d="M0 25.5L14 20.5" stroke="#d0d3cc" stroke-width="1.3"/><path d="M4 50L14 29" stroke="#a4a89f" stroke-width="0.8"/>
<path d="M26 24L38 22V50H33Z" fill="#979b93"/>
<path d="M12 29H25L33 50H4Z" fill="#3a3e36"/><path d="M8 35H28M6 39H30M5 43H31M4 47H32" stroke="#2c302a" stroke-width="0.9"/>
<path d="M1 31L12 27M1 37L10 33M1 43L7 40M28 30L37 27M29 36L37 33M31 42L37 40" stroke="#52564e" stroke-width="0.8"/></g></svg></div>
<svg style="left:866px;top:423px" width="9" height="15" viewBox="0 0 9 15"><path d="M1.3 13.4L7.3 1.2" stroke="#e8900a" stroke-width="3.4" stroke-linecap="butt"/><path d="M1.5 12.8L7.3 1.4" stroke="#fdd23c" stroke-width="1.5"/><path d="M0.5 14.6L1.2 12.4L2.9 13.2Z" fill="#8a6a60"/></svg>
<svg style="left:882px;top:424px" width="12" height="12" viewBox="0 0 12 12"><path d="M4.3 0.5h3.4v3.8h3.8v3.4H7.7v3.8H4.3V7.7H0.5V4.3h3.8z" fill="#92c94a"/><path d="M5 1.3h1.8v3.7h3.7v1" stroke="#c0e58a" stroke-width="0.8" fill="none"/></svg>
<svg style="left:900px;top:426px" width="15" height="9" viewBox="0 0 15 9"><defs><linearGradient id="ag" x1="0" y1="0" x2="0" y2="1"><stop offset="0" stop-color="#86b8e8"/><stop offset="1" stop-color="#3f7cc2"/></linearGradient></defs><path d="M0.4 0.6C1 6 5 9.2 9.8 7.6L13.4 8.6L14.8 0.4L7.2 0.8L9.2 3.8C6 5.2 3 4 0.4 0.6Z" fill="url(#ag)"/></svg>
<svg style="left:921px;top:425px" width="11" height="10" viewBox="0 0 11 10"><path d="M1.6 1.6L9.4 8.4M9.4 1.6L1.6 8.4" stroke="#e04a38" stroke-width="2.5" stroke-linecap="square"/><path d="M2 2L5 4.6" stroke="#f07a68" stroke-width="0.8"/></svg>
<svg style="left:938px;top:423px" width="13" height="13" viewBox="0 0 13 13"><defs><radialGradient id="ig" cx="35%" cy="30%" r="75%"><stop offset="0" stop-color="#8fc0ef"/><stop offset="1" stop-color="#2b6cb5"/></radialGradient></defs><circle cx="6.5" cy="6.5" r="6" fill="url(#ig)"/><rect x="5.3" y="5.2" width="2.5" height="5.2" fill="#fff"/><circle cx="6.5" cy="3.4" r="1.3" fill="#fff"/></svg>
<svg style="left:955px;top:422px" width="12" height="15" viewBox="0 0 12 15"><path d="M0.5 0.5h8l3 3v11h-11z" fill="#f4f4f4" stroke="#c8c8c8"/><path d="M8.5 0.5v3h3" fill="#e0e0e0" stroke="#c8c8c8"/><rect x="3" y="5" width="5" height="5" fill="none" stroke="#bdbdbd"/><rect x="5" y="7" width="5" height="5" fill="#eee" stroke="#bdbdbd"/></svg>
<div class="a" style="left:268px;top:492px;width:705px;height:73px;background:#fff;border-bottom:1px solid #e6e6e6"></div>
<svg style="left:337px;top:495px" width="13" height="15" viewBox="0 0 13 15"><path d="M0.5 0.5h8.5l3.5 3.5v10.5h-12z" fill="#fff" stroke="#a9acc0"/><rect x="2.5" y="4" width="7" height="7.5" fill="#f08a3c"/><rect x="2.5" y="6" width="7" height="1.5" fill="#d8382a"/><rect x="2.5" y="9.5" width="7" height="2" fill="#9b86d6"/><rect x="4.5" y="7.5" width="1.2" height="2" fill="#5a3a20"/></svg>
<div class="t" style="left:356px;top:495px">blue-sky-726929_1280.jpg <span class="g">(441,2 KiB, 1280x853 px)</span></div>
<div class="a" style="left:358px;top:511px;width:75px;height:50px;overflow:hidden"><div class="a" style="left:0;top:0;width:75px;height:50px;background:repeating-conic-gradient(from 0deg at 31px 34px,#4b6294 0deg 4deg,#85876c 4deg 7deg,#6b82b3 7deg 10deg);overflow:hidden;filter:blur(0.35px)"><div class="a" style="left:0;top:0;width:75px;height:50px;background:radial-gradient(circle at 30px 36px,rgba(225,232,248,.7) 0,rgba(195,210,238,.35) 12px,rgba(60,70,100,0) 28px,rgba(15,25,50,.2) 60px)"></div></div>
<svg style="left:0;top:0" width="75" height="50" viewBox="0 0 75 50"><path d="M0 0H13L0 17Z" fill="#161c2a"/><circle cx="24" cy="18" r="4.3" fill="rgba(30,45,80,.3)" stroke="#131c33" stroke-width="2"/><path d="M26 22.5L31.5 34" stroke="#10151f" stroke-width="1.7"/><path d="M27 37Q32 31 38 36Q34 42 27 37Z" fill="#0e1118"/><path d="M71 46L75 41V50H69Z" fill="#161c2a"/></svg></div>
<svg style="left:866px;top:496px" width="9" height="15" viewBox="0 0 9 15"><path d="M1.3 13.4L7.3 1.2" stroke="#e8900a" stroke-width="3.4" stroke-linecap="butt"/><path d="M1.5 12.8L7.3 1.4" stroke="#fdd23c" stroke-width="1.5"/><path d="M0.5 14.6L1.2 12.4L2.9 13.2Z" fill="#8a6a60"/></svg>
<svg style="left:882px;top:497px" width="12" height="12" viewBox="0 0 12 12"><path d="M4.3 0.5h3.4v3.8h3.8v3.4H7.7v3.8H4.3V7.7H0.5V4.3h3.8z" fill="#92c94a"/><path d="M5 1.3h1.8v3.7h3.7v1" stroke="#c0e58a" stroke-width="0.8" fill="none"/></svg>
<svg style="left:900px;top:499px" width="15" height="9" viewBox="0 0 15 9"><defs><linearGradient id="ag" x1="0" y1="0" x2="0" y2="1"><stop offset="0" stop-color="#86b8e8"/><stop offset="1" stop-color="#3f7cc2"/></linearGradient></defs><path d="M0.4 0.6C1 6 5 9.2 9.8 7.6L13.4 8.6L14.8 0.4L7.2 0.8L9.2 3.8C6 5.2 3 4 0.4 0.6Z" fill="url(#ag)"/></svg>
<svg style="left:921px;top:498px" width="11" height="10" viewBox="0 0 11 10"><path d="M1.6 1.6L9.4 8.4M9.4 1.6L1.6 8.4" stroke="#e04a38" stroke-width="2.5" stroke-linecap="square"/><path d="M2 2L5 4.6" stroke="#f07a68" stroke-width="0.8"/></svg>
<svg style="left:938px;top:496px" width="13" height="13" viewBox="0 0 13 13"><defs><radialGradient id="ig" cx="35%" cy="30%" r="75%"><stop offset="0" stop-color="#8fc0ef"/><stop offset="1" stop-color="#2b6cb5"/></radialGradient></defs><circle cx="6.5" cy="6.5" r="6" fill="url(#ig)"/><rect x="5.3" y="5.2" width="2.5" height="5.2" fill="#fff"/><circle cx="6.5" cy="3.4" r="1.3" fill="#fff"/></svg>
<svg style="left:955px;top:495px" width="12" height="15" viewBox="0 0 12 15"><path d="M0.5 0.5h8l3 3v11h-11z" fill="#f4f4f4" stroke="#c8c8c8"/><path d="M8.5 0.5v3h3" fill="#e0e0e0" stroke="#c8c8c8"/><rect x="3" y="5" width="5" height="5" fill="none" stroke="#bdbdbd"/><rect x="5" y="7" width="5" height="5" fill="#eee" stroke="#bdbdbd"/></svg>
<div class="a" style="left:268px;top:565px;width:705px;height:73px;background:#fff;border-bottom:1px solid #e6e6e6"></div>
<svg style="left:337px;top:568px" width="13" height="15" viewBox="0 0 13 15"><path d="M0.5 0.5h8.5l3.5 3.5v10.5h-12z" fill="#fff" stroke="#a9acc0"/><rect x="2.5" y="4" width="7" height="7.5" fill="#f08a3c"/><rect x="2.5" y="6" width="7" height="1.5" fill="#d8382a"/><rect x="2.5" y="9.5" width="7" height="2" fill="#9b86d6"/><rect x="4.5" y="7.5" width="1.2" height="2" fill="#5a3a20"/></svg>
<div class="t" style="left:356px;top:568px">building-731434_1920.jpg <span class="g">(438,1 KiB, 1920x1275 px)</span></div>
<div class="a" style="left:358px;top:584px;width:75px;height:50px;overflow:hidden"><svg style="left:0;top:0" width="75" height="50" viewBox="0 0 75 50"><defs><filter id="bl3"><feGaussianBlur stdDeviation="0.9"/></filter>
<linearGradient id="dk1" x1="0" y1="0" x2="1" y2="0.3"><stop offset="0" stop-color="#262e3c"/><stop offset="0.6" stop-color="#3a4352"/><stop offset="1" stop-color="#7a8591"/></linearGradient>
<linearGradient id="dk2" x1="0" y1="0" x2="0.3" y2="1"><stop offset="0" stop-color="#8a95a0"/><stop offset="0.5" stop-color="#3e4858"/><stop offset="1" stop-color="#1c2230"/></linearGradient></defs>
<rect width="75" height="50" fill="#d2d5d7"/><g filter="url(#bl3)"><rect x="-2" y="-2" width="13" height="54" fill="#e6e8ea"/><rect x="40" y="0" width="35" height="30" fill="#dadcde"/>
<path d="M10 27Q18 22 26 24L44 33L52 46L50 52H10Z" fill="url(#dk1)"/>
<path d="M-2 52Q2 44 11 43L13 52Z" fill="#212836"/>
<path d="M51 38Q62 37 76 35V52H52Z" fill="url(#dk2)"/>
<path d="M44 33L52 38L53 52H47Z" fill="#9aa4ae"/></g></svg></div>
<svg style="left:866px;top:569px" width="9" height="15" viewBox="0 0 9 15"><path d="M1.3 13.4L7.3 1.2" stroke="#e8900a" stroke-width="3.4" stroke-linecap="butt"/><path d="M1.5 12.8L7.3 1.4" stroke="#fdd23c" stroke-width="1.5"/><path d="M0.5 14.6L1.2 12.4L2.9 13.2Z" fill="#8a6a60"/></svg>
<svg style="left:882px;top:570px" width="12" height="12" viewBox="0 0 12 12"><path d="M4.3 0.5h3.4v3.8h3.8v3.4H7.7v3.8H4.3V7.7H0.5V4.3h3.8z" fill="#92c94a"/><path d="M5 1.3h1.8v3.7h3.7v1" stroke="#c0e58a" stroke-width="0.8" fill="none"/></svg>
<svg style="left:900px;top:572px" width="15" height="9" viewBox="0 0 15 9"><defs><linearGradient id="ag" x1="0" y1="0" x2="0" y2="1"><stop offset="0" stop-color="#86b8e8"/><stop offset="1" stop-color="#3f7cc2"/></linearGradient></defs><path d="M0.4 0.6C1 6 5 9.2 9.8 7.6L13.4 8.6L14.8 0.4L7.2 0.8L9.2 3.8C6 5.2 3 4 0.4 0.6Z" fill="url(#ag)"/></svg>
<svg style="left:921px;top:571px" width="11" height="10" viewBox="0 0 11 10"><path d="M1.6 1.6L9.4 8.4M9.4 1.6L1.6 8.4" stroke="#e04a38" stroke-width="2.5" stroke-linecap="square"/><path d="M2 2L5 4.6" stroke="#f07a68" stroke-width="0.8"/></svg>
<svg style="left:938px;top:569px" width="13" height="13" viewBox="0 0 13 13"><defs><radialGradient id="ig" cx="35%" cy="30%" r="75%"><stop offset="0" stop-color="#8fc0ef"/><stop offset="1" stop-color="#2b6cb5"/></radialGradient></defs><circle cx="6.5" cy="6.5" r="6" fill="url(#ig)"/><rect x="5.3" y="5.2" width="2.5" height="5.2" fill="#fff"/><circle cx="6.5" cy="3.4" r="1.3" fill="#fff"/></svg>
<svg style="left:955px;top:568px" width="12" height="15" viewBox="0 0 12 15"><path d="M0.5 0.5h8l3 3v11h-11z" fill="#f4f4f4" stroke="#c8c8c8"/><path d="M8.5 0.5v3h3" fill="#e0e0e0" stroke="#c8c8c8"/><rect x="3" y="5" width="5" height="5" fill="none" stroke="#bdbdbd"/><rect x="5" y="7" width="5" height="5" fill="#eee" stroke="#bdbdbd"/></svg>
<div class="a" style="left:268px;top:638px;width:705px;height:73px;background:#fff;border-bottom:1px solid #e6e6e6"></div>
<svg style="left:337px;top:641px" width="13" height="15" viewBox="0 0 13 15"><path d="M0.5 0.5h8.5l3.5 3.5v10.5h-12z" fill="#fff" stroke="#a9acc0"/><rect x="2.5" y="4" width="7" height="7.5" fill="#f08a3c"/><rect x="2.5" y="6" width="7" height="1.5" fill="#d8382a"/><rect x="2.5" y="9.5" width="7" height="2" fill="#9b86d6"/><rect x="4.5" y="7.5" width="1.2" height="2" fill="#5a3a20"/></svg>
<div class="t" style="left:356px;top:641px">building1.jpeg <span class="g">(222,8 KiB, 1140x821 px)</span></div>
<div class="a" style="left:358px;top:657px;width:69px;height:50px;overflow:hidden"><svg style="left:0;top:0" width="69" height="50" viewBox="0 0 69 50"><rect width="69" height="50" fill="#e4eaf4"/><rect x="6.5" y="4.5" width="10" height="11.5" fill="#d3e0f0" stroke="#3a4352" stroke-width="1"/><path d="M9.5 4V16M9.5 10.5H16.5" stroke="#2c3442" stroke-width="1.2"/><rect x="23.5" y="4.5" width="10" height="11.5" fill="#d3e0f0" stroke="#3a4352" stroke-width="1"/><path d="M26.5 4V16M26.5 10.5H33.5" stroke="#2c3442" stroke-width="1.2"/><rect x="39.5" y="4.5" width="10" height="11.5" fill="#d3e0f0" stroke="#3a4352" stroke-width="1"/><path d="M42.5 4V16M42.5 10.5H49.5" stroke="#2c3442" stroke-width="1.2"/><rect x="56" y="5" width="10" height="11" fill="#8a4a2a"/><rect x="58" y="7" width="6" height="5" fill="#aab6d0"/><rect x="58" y="12" width="6" height="2" fill="#223040"/><rect x="3.5" y="18.5" width="10" height="11.5" fill="#d3e0f0" stroke="#3a4352" stroke-width="1"/><path d="M6.5 18V30M6.5 24.5H13.5" stroke="#2c3442" stroke-width="1.2"/><rect x="20" y="22" width="10" height="11" fill="#8a4a2a"/><rect x="22" y="24" width="6" height="5" fill="#aab6d0"/><rect x="22" y="29" width="6" height="2" fill="#223040"/><rect x="39.5" y="18.5" width="10" height="11.5" fill="#d3e0f0" stroke="#3a4352" stroke-width="1"/><path d="M42.5 18V30M42.5 24.5H49.5" stroke="#2c3442" stroke-width="1.2"/><rect x="53.5" y="18.5" width="10" height="11.5" fill="#d3e0f0" stroke="#3a4352" stroke-width="1"/><path d="M56.5 18V30M56.5 24.5H63.5" stroke="#2c3442" stroke-width="1.2"/><rect x="6.5" y="36.5" width="10" height="11.5" fill="#d3e0f0" stroke="#3a4352" stroke-width="1"/><path d="M9.5 36V48M9.5 42.5H16.5" stroke="#2c3442" stroke-width="1.2"/><rect x="23.5" y="36.5" width="10" height="11.5" fill="#d3e0f0" stroke="#3a4352" stroke-width="1"/><path d="M26.5 36V48M26.5 42.5H33.5" stroke="#2c3442" stroke-width="1.2"/><rect x="39.5" y="36.5" width="10" height="11.5" fill="#d3e0f0" stroke="#3a4352" stroke-width="1"/><path d="M42.5 36V48M42.5 42.5H49.5" stroke="#2c3442" stroke-width="1.2"/><rect x="56.5" y="36.5" width="10" height="11.5" fill="#d3e0f0" stroke="#3a4352" stroke-width="1"/><path d="M59.5 36V48M59.5 42.5H66.5" stroke="#2c3442" stroke-width="1.2"/></svg></div>
<svg style="left:866px;top:642px" width="9" height="15" viewBox="0 0 9 15"><path d="M1.3 13.4L7.3 1.2" stroke="#e8900a" stroke-width="3.4" stroke-linecap="butt"/><path d="M1.5 12.8L7.3 1.4" stroke="#fdd23c" stroke-width="1.5"/><path d="M0.5 14.6L1.2 12.4L2.9 13.2Z" fill="#8a6a60"/></svg>
<svg style="left:882px;top:643px" width="12" height="12" viewBox="0 0 12 12"><path d="M4.3 0.5h3.4v3.8h3.8v3.4H7.7v3.8H4.3V7.7H0.5V4.3h3.8z" fill="#92c94a"/><path d="M5 1.3h1.8v3.7h3.7v1" stroke="#c0e58a" stroke-width="0.8" fill="none"/></svg>
<svg style="left:900px;top:645px" width="15" height="9" viewBox="0 0 15 9"><defs><linearGradient id="ag" x1="0" y1="0" x2="0" y2="1"><stop offset="0" stop-color="#86b8e8"/><stop offset="1" stop-color="#3f7cc2"/></linearGradient></defs><path d="M0.4 0.6C1 6 5 9.2 9.8 7.6L13.4 8.6L14.8 0.4L7.2 0.8L9.2 3.8C6 5.2 3 4 0.4 0.6Z" fill="url(#ag)"/></svg>
<svg style="left:921px;top:644px" width="11" height="10" viewBox="0 0 11 10"><path d="M1.6 1.6L9.4 8.4M9.4 1.6L1.6 8.4" stroke="#e04a38" stroke-width="2.5" stroke-linecap="square"/><path d="M2 2L5 4.6" stroke="#f07a68" stroke-width="0.8"/></svg>
<svg style="left:938px;top:642px" width="13" height="13" viewBox="0 0 13 13"><defs><radialGradient id="ig" cx="35%" cy="30%" r="75%"><stop offset="0" stop-color="#8fc0ef"/><stop offset="1" stop-color="#2b6cb5"/></radialGradient></defs><circle cx="6.5" cy="6.5" r="6" fill="url(#ig)"/><rect x="5.3" y="5.2" width="2.5" height="5.2" fill="#fff"/><circle cx="6.5" cy="3.4" r="1.3" fill="#fff"/></svg>
<svg style="left:955px;top:641px" width="12" height="15" viewBox="0 0 12 15"><path d="M0.5 0.5h8l3 3v11h-11z" fill="#f4f4f4" stroke="#c8c8c8"/><path d="M8.5 0.5v3h3" fill="#e0e0e0" stroke="#c8c8c8"/><rect x="3" y="5" width="5" height="5" fill="none" stroke="#bdbdbd"/><rect x="5" y="7" width="5" height="5" fill="#eee" stroke="#bdbdbd"/></svg>
<div class="a" style="left:268px;top:711px;width:705px;height:73px;background:#fff;border-bottom:1px solid #e6e6e6"></div>
<svg style="left:337px;top:714px" width="13" height="15" viewBox="0 0 13 15"><path d="M0.5 0.5h8.5l3.5 3.5v10.5h-12z" fill="#fff" stroke="#a9acc0"/><rect x="2.5" y="4" width="7" height="7.5" fill="#f08a3c"/><rect x="2.5" y="6" width="7" height="1.5" fill="#d8382a"/><rect x="2.5" y="9.5" width="7" height="2" fill="#9b86d6"/><rect x="4.5" y="7.5" width="1.2" height="2" fill="#5a3a20"/></svg>
<div class="t" style="left:356px;top:714px">building2.jpeg <span class="g">(117,9 KiB, 1140x792 px)</span></div>
<div class="a" style="left:358px;top:730px;width:72px;height:50px;overflow:hidden"><svg style="left:0;top:0" width="72" height="50" viewBox="0 0 72 50"><rect width="72" height="50" fill="#ebebeb"/><rect x="60" y="0" width="4" height="48" fill="#dcdcdc"/>
<rect x="12" y="6.5" width="17" height="25.5" fill="#1f9a2a"/><rect x="14" y="8" width="5.5" height="5" fill="#3a3a30"/><rect x="21.5" y="8" width="5.5" height="5" fill="#3a3a30"/><rect x="14.5" y="17.5" width="5" height="12" fill="#e0e0e0"/><rect x="22" y="17.5" width="5" height="12" fill="#e0e0e0"/>
<rect x="42.5" y="12.5" width="16.5" height="34" fill="#1da52a"/><rect x="42.5" y="12.5" width="16.5" height="1.5" fill="#175a20"/><rect x="0" y="47" width="72" height="3" fill="#9a7a5a"/></svg></div>
<svg style="left:866px;top:715px" width="9" height="15" viewBox="0 0 9 15"><path d="M1.3 13.4L7.3 1.2" stroke="#e8900a" stroke-width="3.4" stroke-linecap="butt"/><path d="M1.5 12.8L7.3 1.4" stroke="#fdd23c" stroke-width="1.5"/><path d="M0.5 14.6L1.2 12.4L2.9 13.2Z" fill="#8a6a60"/></svg>
<svg style="left:882px;top:716px" width="12" height="12" viewBox="0 0 12 12"><path d="M4.3 0.5h3.4v3.8h3.8v3.4H7.7v3.8H4.3V7.7H0.5V4.3h3.8z" fill="#92c94a"/><path d="M5 1.3h1.8v3.7h3.7v1" stroke="#c0e58a" stroke-width="0.8" fill="none"/></svg>
<svg style="left:900px;top:718px" width="15" height="9" viewBox="0 0 15 9"><defs><linearGradient id="ag" x1="0" y1="0" x2="0" y2="1"><stop offset="0" stop-color="#86b8e8"/><stop offset="1" stop-color="#3f7cc2"/></linearGradient></defs><path d="M0.4 0.6C1 6 5 9.2 9.8 7.6L13.4 8.6L14.8 0.4L7.2 0.8L9.2 3.8C6 5.2 3 4 0.4 0.6Z" fill="url(#ag)"/></svg>
<svg style="left:921px;top:717px" width="11" height="10" viewBox="0 0 11 10"><path d="M1.6 1.6L9.4 8.4M9.4 1.6L1.6 8.4" stroke="#e04a38" stroke-width="2.5" stroke-linecap="square"/><path d="M2 2L5 4.6" stroke="#f07a68" stroke-width="0.8"/></svg>
<svg style="left:938px;top:715px" width="13" height="13" viewBox="0 0 13 13"><defs><radialGradient id="ig" cx="35%" cy="30%" r="75%"><stop offset="0" stop-color="#8fc0ef"/><stop offset="1" stop-color="#2b6cb5"/></radialGradient></defs><circle cx="6.5" cy="6.5" r="6" fill="url(#ig)"/><rect x="5.3" y="5.2" width="2.5" height="5.2" fill="#fff"/><circle cx="6.5" cy="3.4" r="1.3" fill="#fff"/></svg>
<svg style="left:955px;top:714px" width="12" height="15" viewBox="0 0 12 15"><path d="M0.5 0.5h8l3 3v11h-11z" fill="#f4f4f4" stroke="#c8c8c8"/><path d="M8.5 0.5v3h3" fill="#e0e0e0" stroke="#c8c8c8"/><rect x="3" y="5" width="5" height="5" fill="none" stroke="#bdbdbd"/><rect x="5" y="7" width="5" height="5" fill="#eee" stroke="#bdbdbd"/></svg>
<div class="a" style="left:268px;top:784px;width:705px;height:73px;background:#fff;border-bottom:1px solid #e6e6e6"></div>
<svg style="left:337px;top:787px" width="13" height="15" viewBox="0 0 13 15"><path d="M0.5 0.5h8.5l3.5 3.5v10.5h-12z" fill="#fff" stroke="#a9acc0"/><rect x="2.5" y="4" width="7" height="7.5" fill="#f08a3c"/><rect x="2.5" y="6" width="7" height="1.5" fill="#d8382a"/><rect x="2.5" y="9.5" width="7" height="2" fill="#9b86d6"/><rect x="4.5" y="7.5" width="1.2" height="2" fill="#5a3a20"/></svg>
<div class="t" style="left:356px;top:787px">building3.jpeg <span class="g">(347,4 KiB, 1140x760 px)</span></div>
<div class="a" style="left:358px;top:803px;width:75px;height:50px;overflow:hidden"><div class="a" style="left:0;top:0;width:75px;height:50px;background:#d6d6d6;background-image:repeating-linear-gradient(55deg,rgba(90,90,90,.75) 0 1px,transparent 1px 4.5px),repeating-linear-gradient(-55deg,rgba(90,90,90,.75) 0 1px,transparent 1px 4.5px)"></div></div>
<svg style="left:866px;top:788px" width="9" height="15" viewBox="0 0 9 15"><path d="M1.3 13.4L7.3 1.2" stroke="#e8900a" stroke-width="3.4" stroke-linecap="butt"/><path d="M1.5 12.8L7.3 1.4" stroke="#fdd23c" stroke-width="1.5"/><path d="M0.5 14.6L1.2 12.4L2.9 13.2Z" fill="#8a6a60"/></svg>
<svg style="left:882px;top:789px" width="12" height="12" viewBox="0 0 12 12"><path d="M4.3 0.5h3.4v3.8h3.8v3.4H7.7v3.8H4.3V7.7H0.5V4.3h3.8z" fill="#92c94a"/><path d="M5 1.3h1.8v3.7h3.7v1" stroke="#c0e58a" stroke-width="0.8" fill="none"/></svg>
<svg style="left:900px;top:791px" width="15" height="9" viewBox="0 0 15 9"><defs><linearGradient id="ag" x1="0" y1="0" x2="0" y2="1"><stop offset="0" stop-color="#86b8e8"/><stop offset="1" stop-color="#3f7cc2"/></linearGradient></defs><path d="M0.4 0.6C1 6 5 9.2 9.8 7.6L13.4 8.6L14.8 0.4L7.2 0.8L9.2 3.8C6 5.2 3 4 0.4 0.6Z" fill="url(#ag)"/></svg>
<svg style="left:921px;top:790px" width="11" height="10" viewBox="0 0 11 10"><path d="M1.6 1.6L9.4 8.4M9.4 1.6L1.6 8.4" stroke="#e04a38" stroke-width="2.5" stroke-linecap="square"/><path d="M2 2L5 4.6" stroke="#f07a68" stroke-width="0.8"/></svg>
<svg style="left:938px;top:788px" width="13" height="13" viewBox="0 0 13 13"><defs><radialGradient id="ig" cx="35%" cy="30%" r="75%"><stop offset="0" stop-color="#8fc0ef"/><stop offset="1" stop-color="#2b6cb5"/></radialGradient></defs><circle cx="6.5" cy="6.5" r="6" fill="url(#ig)"/><rect x="5.3" y="5.2" width="2.5" height="5.2" fill="#fff"/><circle cx="6.5" cy="3.4" r="1.3" fill="#fff"/></svg>
<svg style="left:955px;top:787px" width="12" height="15" viewBox="0 0 12 15"><path d="M0.5 0.5h8l3 3v11h-11z" fill="#f4f4f4" stroke="#c8c8c8"/><path d="M8.5 0.5v3h3" fill="#e0e0e0" stroke="#c8c8c8"/><rect x="3" y="5" width="5" height="5" fill="none" stroke="#bdbdbd"/><rect x="5" y="7" width="5" height="5" fill="#eee" stroke="#bdbdbd"/></svg>
<div class="a" style="left:352px;top:224px;width:175px;height:21px;background:linear-gradient(#444,#333);border-radius:4px;box-shadow:0 1px 3px rgba(0,0,0,.4)"></div>
<svg style="left:360px;top:217px" width="15" height="8" viewBox="0 0 15 8"><path d="M0 8L7.5 0L15 8Z" fill="#444"/></svg>
<div class="t " style="left:358px;top:228px;color:#fff;">Einen neuen Ordner anlegen</div></body></html>
